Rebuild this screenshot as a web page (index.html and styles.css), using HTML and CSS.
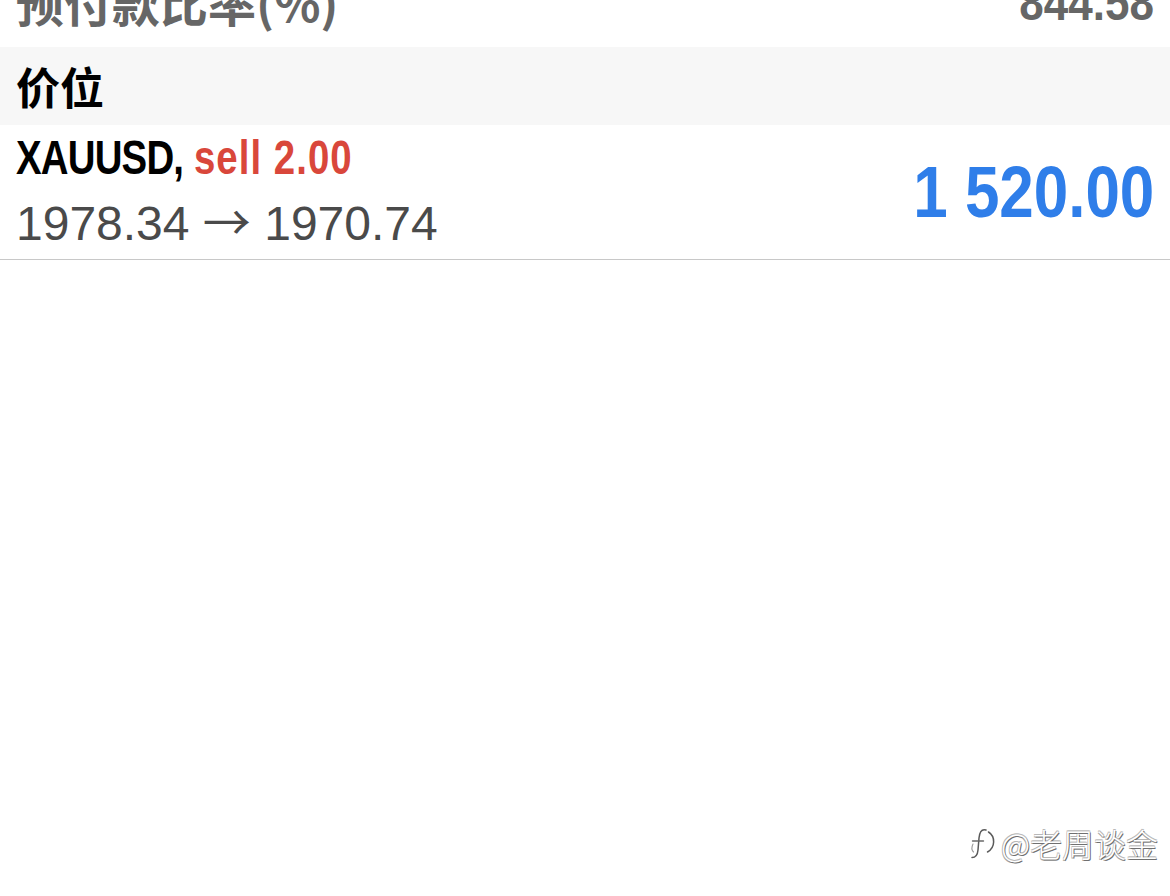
FILE: index.html
```html
<!DOCTYPE html>
<html lang="zh-CN">
<head>
<meta charset="utf-8">
<title>价位</title>
<link rel="stylesheet" href="styles.css">
</head>
<body>
<div class="screen">
  <div class="summary-row">
    <span class="summary-label">预付款比率(%)</span>
    <span class="summary-value">844.58</span>
  </div>
  <div class="section-header">价位</div>
  <div class="position">
    <div class="position-info">
      <div class="position-title"><span class="symbol">XAUUSD,</span> <span class="side">sell 2.00</span></div>
      <div class="position-prices">1978.34 <span class="arrow">→</span> 1970.74</div>
    </div>
    <div class="position-profit">1 520.00</div>
  </div>
  <div class="watermark">
    <svg class="wm-logo" width="28" height="34" viewBox="0 0 28 34" aria-hidden="true">
      <g fill="none" stroke-linecap="round">
        <path d="M17 4 C12 2.5 10.5 7 10 12 L9 24 C8.5 29.5 6.5 31.5 3 31.5" stroke="#ffffff" stroke-width="3.5"/>
        <path d="M17 4 C12 2.5 10.5 7 10 12 L9 24 C8.5 29.5 6.5 31.5 3 31.5" stroke="#5a5a5a" stroke-width="1.5"/>
        <path d="M3.5 15 L14.5 15" stroke="#6a6a6a" stroke-width="1.4"/>
        <path d="M19.5 6 C26.5 10.5 26.5 21.5 18.5 26" stroke="#5a5a5a" stroke-width="1.5"/>
        <path d="M4 18 C2.5 21 2.5 24 4.5 26" stroke="#9a9a9a" stroke-width="1.1"/>
      </g>
    </svg>
    <span class="wm-text">@老周谈金</span>
  </div>
</div>
</body>
</html>
```
FILE: styles.css
```css
html, body {
  margin: 0;
  padding: 0;
  background: #ffffff;
}

.screen {
  position: relative;
  width: 1170px;
  height: 896px;
  overflow: hidden;
  background: #ffffff;
  font-family: "Liberation Sans", "Noto Sans CJK SC", sans-serif;
}

.summary-row {
  height: 47px;
  display: flex;
  justify-content: space-between;
  align-items: flex-end;
  padding: 0 16px;
  overflow: hidden;
}

.summary-label {
  font-family: "Noto Sans CJK SC", sans-serif;
  font-weight: 700;
  font-size: 48px;
  line-height: 48px;
  color: #666666;
  margin-bottom: 22px;
  white-space: nowrap;
}

.summary-value {
  font-family: "Liberation Sans", sans-serif;
  font-weight: 700;
  font-size: 50px;
  line-height: 50px;
  color: #666666;
  margin-bottom: 19px;
  transform: scaleX(0.88);
  transform-origin: right center;
  white-space: nowrap;
}

.section-header {
  height: 78px;
  display: flex;
  align-items: center;
  padding: 0 16px;
  background: #f7f7f7;
  font-family: "Noto Sans CJK SC", sans-serif;
  font-weight: 700;
  font-size: 44px;
  color: #000000;
}

.position {
  height: 134px;
  display: flex;
  align-items: center;
  justify-content: space-between;
  padding: 0 16px;
  border-bottom: 1px solid #c8c8c8;
}

.position-info {
  align-self: flex-start;
  display: flex;
  flex-direction: column;
  gap: 8px;
  padding-top: 8px;
}

.position-title {
  font-family: "Liberation Sans", sans-serif;
  font-weight: 700;
  font-size: 48px;
  line-height: 50px;
  transform: scaleX(0.8);
  transform-origin: left center;
  white-space: nowrap;
}

.symbol {
  color: #000000;
  letter-spacing: -1px;
}

.side {
  color: #d9473b;
  letter-spacing: 1.3px;
}

.position-prices {
  font-family: "Liberation Sans", sans-serif;
  font-size: 48px;
  line-height: 56px;
  color: #4a4a4a;
  white-space: nowrap;
}

.arrow {
  font-family: "Noto Sans CJK SC", sans-serif;
  font-weight: 400;
}

.position-profit {
  font-family: "Liberation Sans", sans-serif;
  font-weight: 700;
  font-size: 72px;
  color: #2f7ee9;
  transform: scaleX(0.86);
  transform-origin: right center;
  white-space: nowrap;
}

.watermark {
  position: absolute;
  right: 12px;
  bottom: 30px;
  display: flex;
  align-items: center;
  gap: 4px;
}

.wm-logo {
  flex: none;
}

.wm-text {
  font-family: "Noto Sans CJK SC", sans-serif;
  font-size: 32px;
  font-weight: 300;
  color: #ffffff;
  text-shadow: 1px 1px 0 #707070, -0.6px -0.6px 0 #b8b8b8, 0.6px -0.6px 0 #c0c0c0, -0.6px 0.6px 0 #a8a8a8;
}
```
